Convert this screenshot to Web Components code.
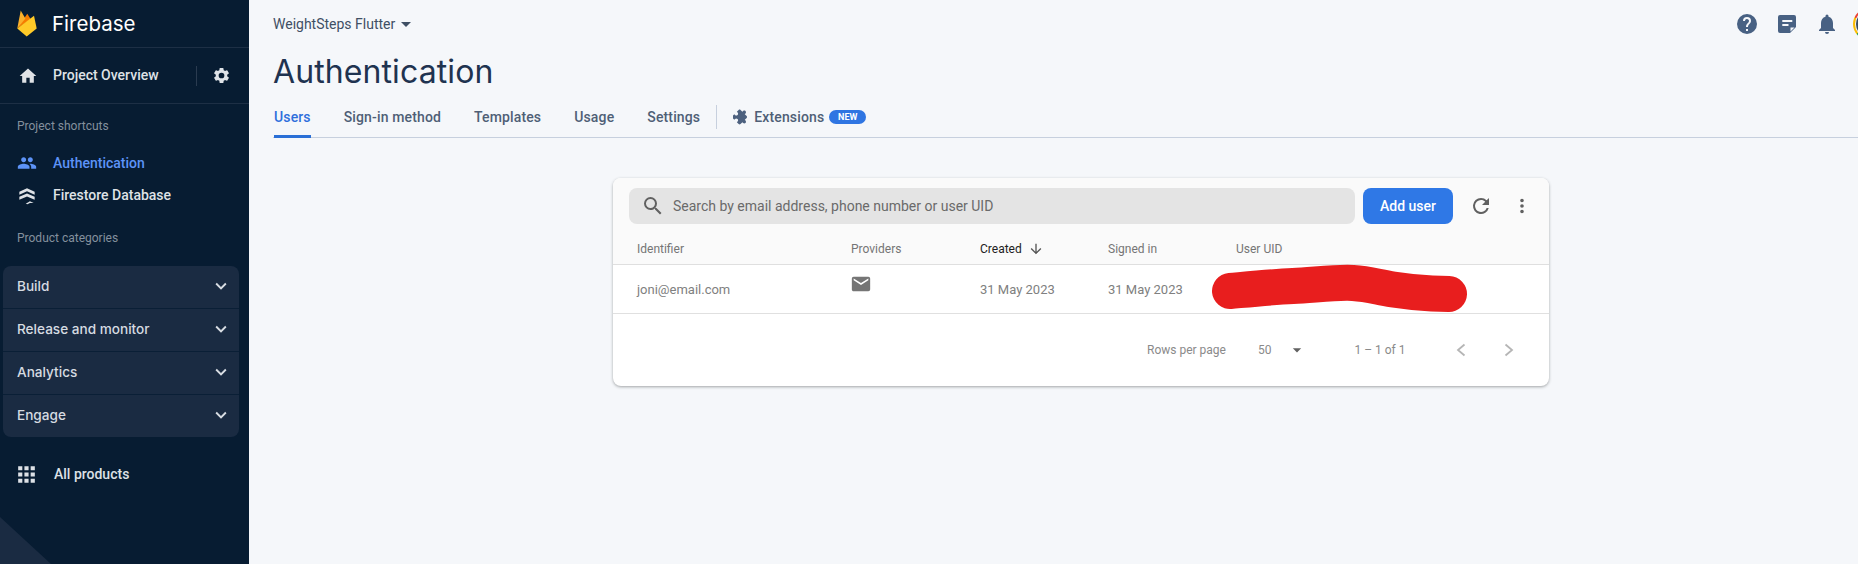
<!DOCTYPE html>
<html>
<head>
<meta charset="utf-8">
<title>Authentication</title>
<style>
  html, body { margin: 0; height: 100%; overflow: hidden; background: #f5f7fa; font-family: Roboto, "Liberation Sans", sans-serif; }
</style>
</head>
<body>
<fb-app>
  <fb-sidebar slot="side"></fb-sidebar>
  <fb-topbar slot="main"></fb-topbar>
  <fb-tabs slot="main"></fb-tabs>
  <fb-users-card slot="main"></fb-users-card>
</fb-app>
<script>
const icons = {
    home: '<path d="M10 20v-6h4v6h5v-8h3L12 3 2 12h3v8z"/>',
    gear: '<path d="M19.14 12.94c.04-.3.06-.61.06-.94s-.02-.64-.07-.94l2.03-1.58a.49.49 0 0 0 .12-.61l-1.92-3.32a.49.49 0 0 0-.59-.22l-2.39.96a7 7 0 0 0-1.62-.94l-.36-2.54a.48.48 0 0 0-.48-.41h-3.84a.48.48 0 0 0-.47.41l-.36 2.54c-.59.24-1.13.57-1.62.94l-2.39-.96a.49.49 0 0 0-.59.22L2.74 8.87a.48.48 0 0 0 .12.61l2.03 1.58c-.05.3-.09.63-.09.94s.02.64.07.94l-2.03 1.58a.49.49 0 0 0-.12.61l1.92 3.32c.12.22.37.29.59.22l2.39-.96c.5.38 1.03.7 1.62.94l.36 2.54c.05.24.24.41.48.41h3.84c.24 0 .44-.17.47-.41l.36-2.54c.59-.24 1.13-.56 1.62-.94l2.39.96c.22.08.47 0 .59-.22l1.92-3.32a.48.48 0 0 0-.12-.61zM12 15.6A3.6 3.6 0 1 1 12 8.4a3.6 3.6 0 0 1 0 7.2z"/>',
    people: '<path d="M16 11c1.66 0 2.99-1.34 2.99-3S17.66 5 16 5s-3 1.34-3 3 1.34 3 3 3zm-8 0c1.66 0 2.99-1.34 2.99-3S9.66 5 8 5 5 6.34 5 8s1.34 3 3 3zm0 2c-2.33 0-7 1.17-7 3.5V19h14v-2.5C15 14.17 10.33 13 8 13zm8 0c-.29 0-.62.02-.97.05C16.19 13.89 17 15.02 17 16.5V19h6v-2.5c0-2.33-4.67-3.5-7-3.5z"/>',
    firestore: '<path d="M2.8 8 12 4l9.2 4v3.6L12 7.6l-9.2 4z"/><path d="M2.8 14.2 12 10.2l9.2 4v3.6l-9.2-4-9.2 4z"/><path d="M10.5 22.5 15.5 19.5 20 21.5H15.5L12.5 23z"/>',
    chevron: '<path d="M7.41 8.59 12 13.17l4.59-4.58L18 10l-6 6-6-6z"/>',
    apps: '<path d="M4 8h4V4H4zm6 12h4v-4h-4zm-6 0h4v-4H4zm0-6h4v-4H4zm6 0h4v-4h-4zm6-10v4h4V4zm-6 4h4V4h-4zm6 6h4v-4h-4zm0 6h4v-4h-4z"/>',
    help: '<path d="M12 2a10 10 0 1 0 0 20 10 10 0 0 0 0-20zm1 17h-2v-2h2zm2.07-7.75-.9.92C13.45 12.9 13 13.5 13 15h-2v-.5c0-1.1.45-2.1 1.17-2.83l1.24-1.26A2 2 0 1 0 10 9H8a4 4 0 1 1 8 0c0 .88-.36 1.68-.93 2.25z"/>',
    notes: '<path fill-rule="evenodd" d="M5 3h14a2 2 0 0 1 2 2v10l-6 6H5a2 2 0 0 1-2-2V5a2 2 0 0 1 2-2zm2.3 5v2h10V8zm0 4v2h6.2v-2zm8.2 3.5v4l4-4z"/>',
    bell: '<path d="M12 22a2 2 0 0 0 2-2h-4a2 2 0 0 0 2 2zm6-6v-5c0-3.07-1.63-5.64-4.5-6.32V4a1.5 1.5 0 0 0-3 0v.68C7.64 5.36 6 7.92 6 11v5l-2 2v1h16v-1z"/>',
    caret: '<path d="m7 10 5 5 5-5z"/>',
    search: '<path d="M15.5 14h-.79l-.28-.27A6.47 6.47 0 0 0 16 9.5 6.5 6.5 0 1 0 9.5 16c1.61 0 3.09-.59 4.23-1.57l.27.28v.79l5 4.99L20.49 19zm-6 0a4.5 4.5 0 1 1 0-9 4.5 4.5 0 0 1 0 9z"/>',
    refresh: '<path d="M17.65 6.35A7.96 7.96 0 0 0 12 4a8 8 0 1 0 7.73 10h-2.08A6 6 0 1 1 12 6c1.66 0 3.14.69 4.22 1.78L13 11h7V4z"/>',
    dots: '<path d="M12 8a2 2 0 1 0 0-4 2 2 0 0 0 0 4zm0 2a2 2 0 1 0 0 4 2 2 0 0 0 0-4zm0 6a2 2 0 1 0 0 4 2 2 0 0 0 0-4z"/>',
    down: '<path d="m20 12-1.41-1.41L13 16.17V4h-2v12.17l-5.58-5.59L4 12l8 8z"/>',
    mail: '<path d="M20 4H4a2 2 0 0 0-2 2v12c0 1.1.9 2 2 2h16a2 2 0 0 0 2-2V6a2 2 0 0 0-2-2zm0 4-8 5-8-5V6l8 5 8-5z"/>',
    left: '<path d="M15.5 6.5 9 12l6.5 5.5" fill="none" stroke="currentColor" stroke-width="1.8"/>',
    right: '<path d="M8.5 6.5 15 12l-6.5 5.5" fill="none" stroke="currentColor" stroke-width="1.8"/>',
    extension: '<path transform="rotate(45 12 12)" d="M20.5 11H19V7c0-1.1-.9-2-2-2h-4V3.5C13 2.12 11.88 1 10.5 1S8 2.12 8 3.5V5H4c-1.1 0-1.99.9-1.99 2v3.8H3.5c1.49 0 2.7 1.21 2.7 2.7s-1.21 2.7-2.7 2.7H2V20c0 1.1.9 2 2 2h3.8v-1.5c0-1.49 1.21-2.7 2.7-2.7 1.49 0 2.7 1.21 2.7 2.7V22H17c1.1 0 2-.9 2-2v-4h1.5c1.38 0 2.5-1.12 2.5-2.5S21.88 11 20.5 11z"/>'
};

function icon(name, size) {
    return `<svg class="i-${name}" width="${size}" height="${size}" viewBox="0 0 24 24" fill="currentColor">${icons[name]}</svg>`;
}

class FbApp extends HTMLElement {
    constructor() {
        super();
        this.attachShadow({mode: "open"});
        this.shadowRoot.innerHTML = `
        <style>
            :host { display: flex; height: 564px; }
            .main { flex: 1; min-width: 0; display: flex; flex-direction: column; }
        </style>
        <slot name="side"></slot>
        <div class="main"><slot name="main"></slot></div>`;
    }
}

class FbNavItem extends HTMLElement {
    constructor() {
        super();
        this.attachShadow({mode: "open"});
    }
    connectedCallback() {
        this.shadowRoot.innerHTML = `
        <style>
            :host { display: flex; align-items: center; height: 32px; padding-left: 17px; color: #dfe2e6; font: 500 14px Roboto, sans-serif; }
            :host([active]) { color: #5d93f7; }
            .ic { width: 20px; height: 20px; margin-right: 16px; display: flex; }
        </style>
        <span class="ic">${icon(this.getAttribute("icon"), 20)}</span><slot></slot>`;
    }
}

class FbCategory extends HTMLElement {
    constructor() {
        super();
        this.attachShadow({mode: "open"});
        this.shadowRoot.innerHTML = `
        <style>
            :host { display: flex; align-items: center; justify-content: space-between; height: 43px; padding: 0 7px 2px 14px; box-sizing: border-box; color: #d6dbe1; font: 500 13.6px Inter, Roboto, sans-serif; border-bottom: 1px solid #0a1f36; }
            :host(:last-child) { height: 42px; border-bottom: 0; }
            svg { display: block; color: #d6dbe1; }
        </style>
        <slot></slot>${icon("chevron", 22)}`;
    }
}

class FbSidebar extends HTMLElement {
    constructor() {
        super();
        this.attachShadow({mode: "open"});
        this.shadowRoot.innerHTML = `
        <style>
            :host { display: block; position: relative; flex: none; width: 249px; height: 564px; background: #071c32; overflow: hidden; font-family: Roboto, sans-serif; }
            .brand { display: flex; align-items: center; height: 48px; padding-left: 17px; box-sizing: border-box; border-bottom: 1px solid #1d2f45; color: #fff; font: 400 20.5px Inter, Roboto, sans-serif; }
            .brand svg { margin-right: 15px; margin-top: -1px; }
            .overview { display: flex; align-items: center; height: 55px; padding-left: 18px; border-bottom: 1px solid #1d2f45; color: #dfe2e6; font: 500 14px Roboto, sans-serif; }
            .overview .ic { display: flex; margin-right: 15px; }
            .overview .name { margin-top: -2px; }
            .overview .sep { width: 1px; height: 20px; background: #2a3b50; margin-left: auto; }
            .overview .gear { display: flex; margin: 0 18px 0 15px; color: #dfe3e8; }
            .label { padding-left: 17px; color: #84909d; font-size: 12px; line-height: 14px; }
            .l1 { margin-top: 15px; margin-bottom: 14px; }
            .l2 { margin-top: 20px; margin-bottom: 21px; }
            .cats { margin: 0 10px 0 3px; background: #1a2b42; border-radius: 8px; overflow: hidden; }
            .all { display: flex; align-items: center; height: 32px; margin-top: 21px; padding-left: 17px; color: #dde1e6; font: 500 14px Roboto, sans-serif; }
            .all .ic { display: flex; margin-right: 15px; margin-left: -3px; }
            .corner { position: absolute; left: 0; bottom: 0; width: 51px; height: 47px; background: #1a2b42; clip-path: polygon(0 0, 100% 100%, 0 100%); }
        </style>
        <div class="brand">
            <svg width="20" height="27" viewBox="0 0 20 27">
                <path d="M.3 18.5 10.3 3.8 13.7 9.2z" fill="#f57c00"/>
                <path d="M.3 18.5 3.7.5 8.4 8.6z" fill="#fbb02a"/>
                <path d="M.3 18.5 17 5.8 19.7 18.5 9.7 26.5z" fill="#ffca28"/>
            </svg>
            Firebase
        </div>
        <div class="overview">
            <span class="ic">${icon("home", 20)}</span><span class="name">Project Overview</span>
            <span class="sep"></span>
            <span class="gear">${icon("gear", 19)}</span>
        </div>
        <div class="label l1">Project shortcuts</div>
        <fb-nav-item icon="people" active>Authentication</fb-nav-item>
        <fb-nav-item icon="firestore">Firestore Database</fb-nav-item>
        <div class="label l2">Product categories</div>
        <div class="cats">
            <fb-category>Build</fb-category>
            <fb-category>Release and monitor</fb-category>
            <fb-category>Analytics</fb-category>
            <fb-category>Engage</fb-category>
        </div>
        <div class="all"><span class="ic">${icon("apps", 25)}</span>All products</div>
        <div class="corner"></div>`;
    }
}

class FbTopbar extends HTMLElement {
    constructor() {
        super();
        this.attachShadow({mode: "open"});
        this.shadowRoot.innerHTML = `
        <style>
            :host { display: block; padding-left: 24px; color: #3f4f64; font-family: Roboto, sans-serif; }
            .row { display: flex; align-items: center; height: 47px; }
            .project { font-size: 14px; display: flex; align-items: center; }
            .project svg { margin-left: -1px; }
            .actions { margin-left: auto; display: flex; align-items: center; color: #486183; margin-right: -27px; }
            .actions svg { display: block; margin-right: 16px; }
            .avatar { width: 32px; height: 32px; flex: none; box-sizing: border-box; padding: 2px; border-radius: 50%; background: conic-gradient(#4285f4 0 120deg, #34a853 120deg 232deg, #fbbc04 232deg 295deg, #ea4335 295deg); margin-left: -2px; }
            .avatar div { height: 100%; box-sizing: border-box; padding: 1px; border-radius: 50%; background: #f5f7fa; }
            .avatar div div { background: #3a4d63; padding: 0; }
            h1 { margin: 0; height: 49px; color: #1f3350; font: 400 32px/49px Inter, Roboto, sans-serif; letter-spacing: .1px; }
        </style>
        <div class="row">
            <div class="project">WeightSteps Flutter ${icon("caret", 24)}</div>
            <div class="actions">${icon("help", 24)}${icon("notes", 24)}${icon("bell", 24)}<div class="avatar"><div><div></div></div></div></div>
        </div>
        <h1>Authentication</h1>`;
    }
}

class FbTabs extends HTMLElement {
    constructor() {
        super();
        this.attachShadow({mode: "open"});
        this.shadowRoot.innerHTML = `
        <style>
            :host { display: flex; align-items: stretch; height: 42px; margin-left: 24px; box-sizing: border-box; border-bottom: 1px solid #c7d0de; color: #4f5f76; font: 500 14px Roboto, sans-serif; letter-spacing: .14px; }
            .tab { display: flex; align-items: center; margin-right: 33px; }
            .tab.first { color: #2f6fdc; position: relative; margin-left: 1px; }
            .tab.first::after { content: ""; position: absolute; left: 0; right: 0; bottom: -1px; height: 3px; background: #2a6fd6; }
            .sep { width: 1px; height: 24px; background: #c7d0de; margin: 9px 16px 0 -17px; }
            .ext { display: flex; align-items: center; }
            .ext svg { margin-right: 5px; color: #4d617f; }
            .new { margin-left: 5px; width: 37px; height: 14px; display: flex; align-items: center; justify-content: center; border-radius: 7px; background: #2f75e2; color: #fff; font: 700 9px Roboto, sans-serif; }
        </style>
        <div class="tab first">Users</div>
        <div class="tab">Sign-in method</div>
        <div class="tab">Templates</div>
        <div class="tab">Usage</div>
        <div class="tab">Settings</div>
        <div class="sep"></div>
        <div class="ext">${icon("extension", 16)}Extensions<span class="new">NEW</span></div>`;
    }
}

class FbUsersCard extends HTMLElement {
    constructor() {
        super();
        this.attachShadow({mode: "open"});
        this.shadowRoot.innerHTML = `
        <style>
            :host { display: block; width: 936px; height: 208px; margin: 40px 0 0 364px; box-sizing: border-box; background: #fff; border-radius: 8px; box-shadow: 0 1px 3px rgba(60,64,67,.45); overflow: hidden; color: #757575; font: 400 12px Roboto, sans-serif; }
            .head { background: #fafafa; height: 86px; border-bottom: 1px solid #dfdfdf; }
            .tools { display: flex; align-items: center; padding: 10px 0 0 16px; height: 36px; }
            .search { flex: none; width: 726px; height: 36px; box-sizing: border-box; padding-left: 12px; display: flex; align-items: center; background: #e4e4e4; border-radius: 8px; color: #6a6a6a; font-size: 14px; }
            .search svg { margin-right: 8px; color: #616161; }
            .add { flex: none; width: 90px; height: 36px; margin-left: 8px; display: flex; align-items: center; justify-content: center; background: #2f78e6; border-radius: 8px; color: #fff; font: 500 14px Roboto, sans-serif; }
            .refresh { display: flex; margin-left: 16px; color: #616161; }
            .dots { display: flex; margin-left: 18px; color: #616161; }
            .row { display: grid; grid-template-columns: 214px 129px 128px 128px 1fr; padding-left: 24px; align-items: center; }
            .row.h { height: 30px; padding-top: 10px; font-size: 12px; }
            .sorted { display: flex; align-items: center; color: #212121; }
            .sorted svg { margin-left: 6px; color: #555; }
            .row.b { height: 48px; border-bottom: 1px solid #e0e0e0; color: #808080; font-size: 13px; }
            .mail { display: flex; color: #757575; margin: -10px 0 0 -1px; }
            .uid { position: relative; height: 48px; }
            .uid svg { position: absolute; left: -24px; top: -1px; overflow: visible; }
            .foot { display: flex; align-items: center; height: 72px; padding-left: 534px; color: #8a8a8a; font-size: 12px; }
            .foot .n { margin-left: 32px; }
            .foot .caret { display: flex; margin-left: 16px; color: #616161; }
            .foot .range { margin-left: 47px; }
            .foot .nav { display: flex; color: #b5b5b5; margin-left: 44px; }
            .foot .nav + .nav { margin-left: 24px; }
        </style>
        <div class="head">
            <div class="tools">
                <div class="search">${icon("search", 24)}Search by email address, phone number or user UID</div>
                <div class="add">Add user</div>
                <span class="refresh">${icon("refresh", 24)}</span>
                <span class="dots">${icon("dots", 22)}</span>
            </div>
            <div class="row h">
                <div>Identifier</div><div>Providers</div>
                <div class="sorted">Created ${icon("down", 16)}</div>
                <div>Signed in</div><div>User UID</div>
            </div>
        </div>
        <div class="row b">
            <div>joni@email.com</div>
            <div class="mail">${icon("mail", 22)}</div>
            <div>31 May 2023</div>
            <div>31 May 2023</div>
            <div class="uid">
                <svg width="260" height="50" viewBox="0 0 260 50"><path d="M18 27C40 25 60 23 81 22S125 18 141 19 165 23 181 25.5 210 29 220 29.5L237 30" fill="none" stroke="#e81e1e" stroke-width="36" stroke-linecap="round" stroke-linejoin="round"/></svg>
            </div>
        </div>
        <div class="foot">
            <span>Rows per page</span>
            <span class="n">50</span>
            <span class="caret">${icon("caret", 20)}</span>
            <span class="range">1 – 1 of 1</span>
            <span class="nav">${icon("left", 24)}</span>
            <span class="nav">${icon("right", 24)}</span>
        </div>`;
    }
}

customElements.define("fb-app", FbApp);
customElements.define("fb-nav-item", FbNavItem);
customElements.define("fb-category", FbCategory);
customElements.define("fb-sidebar", FbSidebar);
customElements.define("fb-topbar", FbTopbar);
customElements.define("fb-tabs", FbTabs);
customElements.define("fb-users-card", FbUsersCard);
</script>
</body>
</html>
